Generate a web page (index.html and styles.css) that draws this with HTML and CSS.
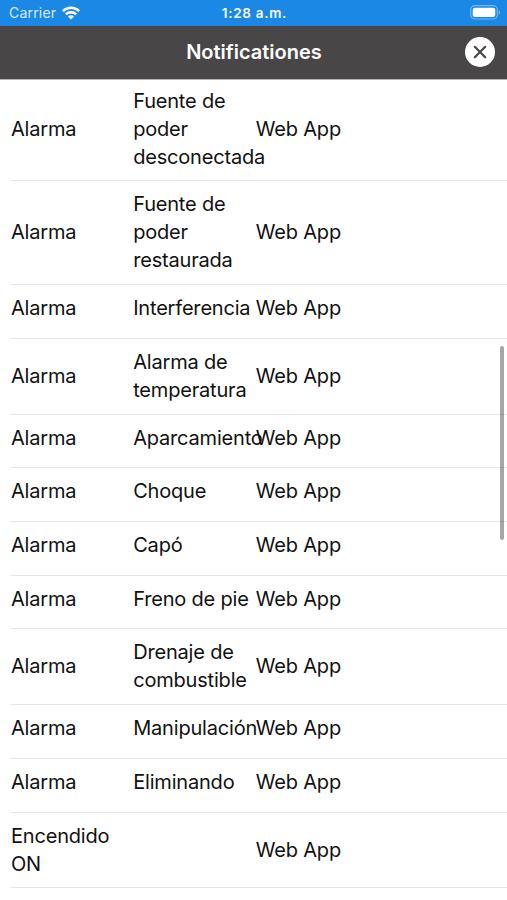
FILE: index.html
```html
<!DOCTYPE html>
<html lang="es">
<head>
<meta charset="utf-8">
<title>Notificationes</title>
<link rel="stylesheet" href="styles.css">
</head>
<body>
<div class="status">
  <div class="carrier"><span>Carrier</span>
    <svg class="wifi" viewBox="0 0 18 14" width="18" height="14"><g fill="none" stroke="#fff" stroke-width="2.5"><path d="M.8 5.1a11.7 11.7 0 0 1 16.4 0"/><path d="M3.8 8.4a7.5 7.5 0 0 1 10.4 0"/></g><path d="M6 10.6a4.3 4.3 0 0 1 6 0L9 13.6z" fill="#fff"/></svg>
  </div>
  <div class="time">1:28 a.m.</div>
  <svg class="battery" viewBox="0 0 31 15" width="31" height="15"><rect x=".7" y=".7" width="26.6" height="13.3" rx="4" fill="none" stroke="#76b6f1" stroke-width="1.2"/><rect x="2.7" y="2.7" width="22.6" height="9.3" rx="2.2" fill="#fff"/><path d="M28.8 5.2a2.5 2.5 0 0 1 0 4.4z" fill="#76b6f1"/></svg>
</div>
<header class="header">
  <h1>Notificationes</h1>
  <button class="close" aria-label="Cerrar"><svg viewBox="0 0 30 30" width="30" height="30"><circle cx="15" cy="15" r="15" fill="#fff"/><path d="M9.8 9.8l10.4 10.4M20.2 9.8L9.8 20.2" stroke="#484646" stroke-width="2.2" stroke-linecap="round"/></svg></button>
</header>
<main class="list">
  <div class="row first"><span>Alarma</span><span>Fuente de poder desconectada</span><span>Web App</span></div>
  <div class="row"><span>Alarma</span><span>Fuente de poder restaurada</span><span>Web App</span></div>
  <div class="row single"><span>Alarma</span><span>Interferencia</span><span>Web App</span></div>
  <div class="row"><span>Alarma</span><span>Alarma de temperatura</span><span>Web App</span></div>
  <div class="row single"><span>Alarma</span><span>Aparcamiento</span><span>Web App</span></div>
  <div class="row single"><span>Alarma</span><span>Choque</span><span>Web App</span></div>
  <div class="row single"><span>Alarma</span><span>Capó</span><span>Web App</span></div>
  <div class="row single"><span>Alarma</span><span class="nowrap">Freno de pie</span><span>Web App</span></div>
  <div class="row"><span>Alarma</span><span>Drenaje de combustible</span><span>Web App</span></div>
  <div class="row single"><span>Alarma</span><span>Manipulación</span><span>Web App</span></div>
  <div class="row single"><span>Alarma</span><span>Eliminando</span><span>Web App</span></div>
  <div class="row"><span>Encendido ON</span><span></span><span>Web App</span></div>
</main>
<div class="scrollbar"></div>
</body>
</html>
```
FILE: styles.css
```css
* { box-sizing: border-box; }
body {
  margin: 0;
  height: 900px;
  overflow: hidden;
  background: #fff;
  color: #111;
  font-family: Inter, "Liberation Sans", sans-serif;
}
.status {
  display: grid;
  grid-template-columns: 1fr auto 1fr;
  align-items: center;
  height: 25.5px;
  padding: 0 6px 0 9px;
  background: #1b88e6;
  color: #fff;
}
.carrier { display: flex; align-items: center; gap: 6px; font-size: 14px; letter-spacing: .2px; color: #d9ebfc; }
.wifi { display: block; }
.time { font-size: 13.5px; font-weight: 600; letter-spacing: .7px; padding-right: 1px; }
.battery { justify-self: end; }
.header {
  display: grid;
  grid-template-columns: 30px 1fr 30px;
  align-items: center;
  height: 53px;
  padding: 0 12px;
  background: #484646;
  color: #fff;
  border-bottom: 1px solid #484646;
}
h1 { grid-column: 2; margin: 0; padding-left: 1px; text-align: center; font-size: 20px; font-weight: 600; }
.close { width: 30px; height: 30px; padding: 0; border: 0; background: none; }
.close svg { display: block; }
.list { padding-left: 11px; border-top: 1px solid #b5b4b4; }
.row {
  display: grid;
  grid-template-columns: 122.2px 122.6px 1fr;
  align-items: center;
  padding: 9px 0 9.8px;
  border-bottom: 1px solid #e6e6e6;
  font-size: 20px;
  line-height: 28px;
  letter-spacing: -.19px;
}
.row.first { padding-top: 7px; }
.row.single { padding-bottom: 15.7px; }
.row span:nth-child(1) { padding-right: 20px; }
.row span:nth-child(2) { padding-right: 4px; }
.row .nowrap { white-space: nowrap; }
.scrollbar {
  position: absolute;
  top: 346px;
  right: 3px;
  width: 4px;
  height: 194px;
  border-radius: 2px;
  background: rgba(0, 0, 0, .35);
}
```
